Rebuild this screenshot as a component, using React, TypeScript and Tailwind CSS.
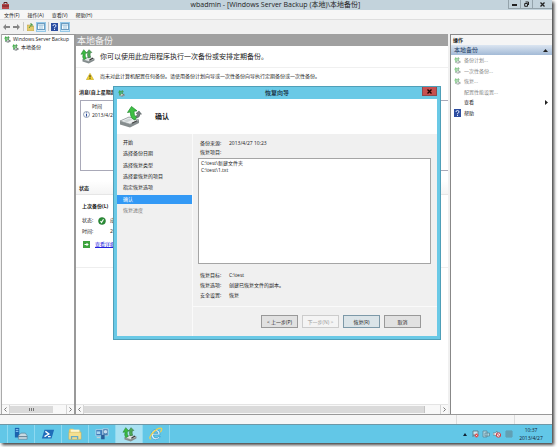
import React from "react";

function DiskIcon({ size = 8, faded = false }: { size?: number; faded?: boolean }) {
  return (
    <svg width={size} height={size} viewBox="0 0 24 24" className="shrink-0" opacity={faded ? 0.65 : 1} aria-hidden="true">
      <path d="M4 17 L13 13 L23 16 L23 18.500 L14 23 L4 20 Z" fill="#858d8e" />
      <path d="M4 17 L13 13 L23 16 L14 20 Z" fill="#dfe4e4" stroke="#7b8384" strokeWidth=".8" />
      <path d="M15 18 L21 14.500" stroke="#333" strokeWidth="1.800" />
      <path d="M6 17 Q3 13 5 8 L1.500 8.500 L6 1 L11 6.500 L8.500 7 Q7.500 12 10 15 Z" fill="#3cba42" stroke="#1c7d28" strokeWidth=".8" />
      <path d="M13 14 Q11 10 12.500 6 L10.500 6.300 L14.500 1 L19 5.500 L16.500 6 Q15.500 10 17 13 Z" fill="#4da955" stroke="#2c6a35" strokeWidth=".8" />
    </svg>
  );
}

function RestoreIcon() {
  return (
    <svg width="22" height="22" viewBox="0 0 22 22" className="shrink-0" aria-hidden="true">
      <path d="M0 15 L9 11 L19 14 L19 17 L10 21.500 L0 18.500 Z" fill="#868d8e" />
      <path d="M0 15 L9 11 L19 14 L10 18.200 Z" fill="#eceff0" stroke="#8b9293" strokeWidth=".7" />
      <path d="M3 15 L9 12.500 L13 13.600 L7 16.300 Z" fill="#cfd5d6" />
      <path d="M12 17.300 L17 14.800" stroke="#444" strokeWidth="1.200" />
      <path d="M17 12 Q20 11 20 8 L21.500 8.200 L19 5 L16 7.500 L17.600 7.700 Q17.500 9.500 15.500 10.500 Z" fill="#767f80" stroke="#4c5455" strokeWidth=".5" />
      <path d="M15 14 Q10 12.500 10.500 6 L7.500 6.500 L11.500 .5 L17 4.800 L14 5.300 Q13.500 9 16.500 11.500 Z" fill="#3fc044" stroke="#1f8a2b" strokeWidth=".7" />
    </svg>
  );
}

function HelpIcon() {
  return (
    <svg width="7" height="8" viewBox="0 0 7 8" className="shrink-0" aria-hidden="true">
      <rect width="7" height="8" fill="#2c4da0" />
      <path d="M2 3 Q2 1.500 3.500 1.500 Q5 1.500 5 3 Q5 3.800 3.500 4.500 V5.300 M3.500 6 V7" fill="none" stroke="#dfe8ff" strokeWidth="1" />
    </svg>
  );
}

function PaneIcon() {
  return (
    <svg width="8" height="7" viewBox="0 0 8 7" aria-hidden="true">
      <rect x=".5" y=".5" width="7" height="6" fill="#f4fafd" stroke="#6d9cc0" />
      <path d="M1 2 H7 M3 2 V6 M5 2 V6" stroke="#8ab5d2" strokeWidth=".8" />
    </svg>
  );
}

function Arrow({ flip = false }: { flip?: boolean }) {
  return (
    <svg width="7" height="6" viewBox="0 0 7 6" className={flip ? "rotate-180" : ""} aria-hidden="true">
      <path d="M0 3 L3 0 V2 H7 V4 H3 V6 Z" fill="#858585" />
    </svg>
  );
}

function ScrollBar({ part }: { part: boolean }) {
  return (
    <div className="flex h-[10px] shrink-0 items-center border-t border-[#e4e4e4] bg-[#f8f8f8]">
      <button aria-label="向左滚动" className="flex h-full w-2 items-center justify-center border-r border-[#d5d5d5]">
        <svg width="3" height="5" viewBox="0 0 3 5"><path d="M2.500 .5 L.5 2.500 L2.500 4.500" fill="none" stroke="#777" /></svg>
      </button>
      <div className={part ? "flex h-[7px] w-[43px] items-center justify-center gap-px bg-[#dadada]" : "h-[7px] w-11/12 border-r border-[#c4c4c4] bg-[#dadada]"}>
        {part && <><i className="h-[3px] w-px bg-[#777]" /><i className="h-[3px] w-px bg-[#777]" /><i className="h-[3px] w-px bg-[#777]" /></>}
      </div>
      <div className="flex-1" />
      <button aria-label="向右滚动" className="flex h-full w-2 items-center justify-center border-l border-[#d5d5d5]">
        <svg width="3" height="5" viewBox="0 0 3 5"><path d="M.5 .5 L2.500 2.500 L.5 4.500" fill="none" stroke="#777" /></svg>
      </button>
    </div>
  );
}

function TitleBar() {
  return (
    <header className="flex h-[10px] shrink-0 items-start bg-[#c3d3dc]">
      <div className="flex w-[43px] pl-[2px] pt-[2px]">
        <svg width="7" height="7" viewBox="0 0 7 7" aria-hidden="true">
          <path d="M2 2 V.5 H5 V2" fill="none" stroke="#5c2222" />
          <rect y="2" width="7" height="5" fill="#b8474a" />
          <path d="M0 4 H7" stroke="#6b2226" />
        </svg>
      </div>
      <h1 className="flex-1 text-center text-[7px] leading-[10px] text-[#222]">wbadmin - [Windows Server Backup (本地)\本地备份]</h1>
      <div className="flex h-[9px] w-[44px] border-b border-l border-[#94a3ab]">
        <button aria-label="最小化" className="flex w-3 items-center justify-center border-r border-[#94a3ab]">
          <svg width="5" height="5"><rect y="2" width="5" height="2" fill="#222" /></svg>
        </button>
        <button aria-label="还原" className="flex w-3 items-center justify-center border-r border-[#94a3ab]">
          <svg width="5" height="6" viewBox="0 0 5 6"><path d="M1.500 1 H4.500 V4 M.7 2.500 H3.500 V5.300 H.7 Z" fill="none" stroke="#222" /></svg>
        </button>
        <button aria-label="关闭" className="flex flex-1 items-center justify-center">
          <svg width="5" height="5" viewBox="0 0 5 5"><path d="M.5 .5 L4.500 4.500 M4.500 .5 L.5 4.500" stroke="#222" strokeWidth="1.300" /></svg>
        </button>
      </div>
    </header>
  );
}

function MenuAndTools() {
  return (
    <>
      <nav className="flex h-[10px] shrink-0 items-center gap-2 border-b border-[#dedede] bg-[#f6f6f6] pl-1 leading-[8px]">
        {["文件(F)", "操作(A)", "查看(V)", "帮助(H)"].map((m) => <button key={m}>{m}</button>)}
      </nav>
      <div className="flex h-[14px] shrink-0 items-center bg-[#f1f1f1] pb-px pl-[3px]">
        <button aria-label="后退" className="mr-[3px]"><Arrow /></button>
        <button aria-label="前进" className="mr-[3px]"><Arrow flip /></button>
        <span className="mr-[3px] h-[9px] w-px bg-[#c8c8c8]" />
        <button aria-label="上一级" className="mr-[2px]">
          <svg width="7" height="8" viewBox="0 0 7 8"><path d="M0 2 H3 L4 3 H7 V8 H0 Z" fill="#e3ca6c" stroke="#b49b45" strokeWidth=".5" /><path d="M2 5 L5 1 M5 3.500 V1 H3" stroke="#4c963c" fill="none" /></svg>
        </button>
        <button aria-label="显示控制台树" className="mr-[2px] flex h-[10px] w-[10px] items-center justify-center border border-[#94c8e8] bg-[#d5ebf8]"><PaneIcon /></button>
        <span className="mr-[2px] h-[9px] w-px bg-[#c8c8c8]" />
        <button aria-label="帮助" className="mr-[2px]"><HelpIcon /></button>
        <button aria-label="显示操作窗格" className="flex h-[10px] w-[10px] items-center justify-center border border-[#94c8e8] bg-[#d5ebf8]"><PaneIcon /></button>
      </div>
    </>
  );
}

function Tree() {
  return (
    <aside className="flex w-[73px] shrink-0 flex-col border-r border-t border-[#999] bg-white">
      <div className="flex-1 overflow-hidden whitespace-nowrap pl-[2px] leading-[8px]">
        <div className="flex h-[8px] items-center gap-[2px]"><DiskIcon size={7} />Windows Server Backup</div>
        <div className="flex h-[8px] items-center gap-[2px] pl-2"><DiskIcon size={7} />本地备份</div>
      </div>
      <ScrollBar part />
    </aside>
  );
}

function Content() {
  return (
    <main className="flex min-w-0 flex-1 flex-col border-l border-[#999] bg-white">
      <h2 className="h-[12px] shrink-0 overflow-hidden whitespace-nowrap bg-[#a0a0a0] pl-px text-[9px] leading-[13px] text-[#f4f4f4]">本地备份</h2>
      <div className="flex-1 overflow-hidden whitespace-nowrap">
        <div className="flex h-[22px] items-center gap-[5px] border-b border-[#f0f0f0] pl-1 text-[7px]">
          <DiskIcon size={15} />
          <p>你可以使用此应用程序执行一次备份或安排定期备份。</p>
        </div>
        <div className="flex h-[16px] items-center gap-[6px] pl-[10px]">
          <svg width="8" height="7" viewBox="0 0 8 7" aria-hidden="true"><path d="M4 .3 L7.700 6.700 H.3 Z" fill="#f4d32b" stroke="#b79a1c" strokeWidth=".5" /><path d="M4 2.200 V4.500 M4 5.200 V6" stroke="#222" /></svg>
          <p>尚未对此计算机配置任何备份。请使用备份计划向导或一次性备份向导执行定期备份或一次性备份。</p>
        </div>
        <h3 className="mt-[2px] h-[14px] pl-[3px] font-bold leading-[12px]">消息(自上星期起，双击消息可查看详细信息)</h3>
        <div className="ml-1 h-[71px] border border-r-0 border-[#a9a9b8]">
          <table className="w-full">
            <thead><tr><th className="h-[9px] pl-[11px] pt-px text-left font-normal leading-[8px]">时间</th></tr></thead>
            <tbody><tr><td className="flex h-[9px] items-center gap-[2px] pl-[2px]">
              <svg width="7" height="7" viewBox="0 0 7 7" aria-hidden="true"><circle cx="3.500" cy="3.500" r="3" fill="#f5f8fc" stroke="#6d7c96" strokeWidth=".7" /><path d="M3.500 3 V5.500 M3.500 1.500 V2.300" stroke="#27479a" /></svg>
              2013/4/27 10:23
            </td></tr></tbody>
          </table>
        </div>
        <h3 className="mt-[10px] h-[14px] border-b border-[#e6e6e6] bg-gradient-to-b from-white to-[#f4f4f4] pl-[3px] font-bold leading-[14px]">状态</h3>
        <div className="h-[73px] border-b border-[#eee] pl-[6px] pt-[6px]">
          <h4 className="mb-[4px] h-[10px] font-bold leading-[10px]">上次备份(L)</h4>
          <dl className="grid grid-cols-[16px_12px_1fr] leading-[11px]">
            <dt>状态:</dt>
            <dd className="flex items-center">
              <svg width="8" height="8" viewBox="0 0 8 8" aria-hidden="true"><circle cx="4" cy="4" r="3.500" fill="#2c8f38" stroke="#1f6d29" strokeWidth=".5" /><path d="M2.500 4.200 L3.500 5.500 L5.500 2.200" fill="none" stroke="#fff" strokeWidth="1.100" /></svg>
            </dd>
            <dd>成功</dd>
            <dt>时间:</dt><dd /><dd>2013/4/27 10:23</dd>
          </dl>
          <div className="mt-[2px] flex h-[10px] items-center gap-[5px] pl-px">
            <svg width="7" height="7" viewBox="0 0 7 7" aria-hidden="true"><rect width="7" height="7" fill="#3da33d" /><path d="M1.500 3.500 H5 M3.500 2 L5 3.500 L3.500 5" fill="none" stroke="#fff" /></svg>
            <a href="#details" className="text-[#2222dd] underline">查看详细信息</a>
          </div>
        </div>
      </div>
      <ScrollBar part={false} />
    </main>
  );
}

function Actions() {
  const rows = [
    { label: "备份计划...", icon: "disk", off: true },
    { label: "一次性备份...", icon: "disk", off: true },
    { label: "恢复...", icon: "disk", off: true },
    { label: "配置性能设置...", icon: "", off: true },
    { label: "查看", icon: "", off: false },
    { label: "帮助", icon: "help", off: false },
  ];
  return (
    <aside className="w-[102px] shrink-0 border-l border-t border-[#888] bg-white">
      <h2 className="h-[10px] bg-[#f5f5f5] pl-[2px] font-bold leading-[10px]">操作</h2>
      <h3 className="flex h-[10px] items-center justify-between bg-gradient-to-b from-[#dbe5f1] to-[#a3bad6] pl-[3px] pr-1 text-[6px] text-[#17375e]">
        本地备份
        <svg width="5" height="3" viewBox="0 0 5 3" aria-hidden="true"><path d="M2.500 0 L5 3 H0 Z" fill="#222" /></svg>
      </h3>
      <ul className="grid h-[63px] grid-rows-6">
        {rows.map((r) => (
          <li key={r.label} className="flex">
            <button disabled={r.off} className={`flex flex-1 items-center pl-[3px] pr-[4px] ${r.off ? "text-[#858585]" : "text-[#222]"}`}>
              <span className="w-[10px]">
                {r.icon === "disk" && <DiskIcon size={7} faded />}
                {r.icon === "help" && <HelpIcon />}
              </span>
              <span className="flex-1 text-left">{r.label}</span>
              {r.label === "查看" && <svg width="3" height="5" viewBox="0 0 3 5"><path d="M0 0 L3 2.500 L0 5 Z" fill="#222" /></svg>}
            </button>
          </li>
        ))}
      </ul>
    </aside>
  );
}

function Dialog() {
  const steps = ["开始", "选择备份日期", "选择恢复类型", "选择要恢复的项目", "指定恢复选项", "确认", "恢复进度"];
  const button = "h-[13px] w-[37px] border leading-[10px]";
  return (
    <section role="dialog" aria-label="恢复向导" className="absolute left-[113px] top-[86px] flex h-[254px] w-[328px] flex-col border border-[#4f9fb8] bg-[#6ac9e6] px-[3px] pb-[3px]">
      <header className="flex h-[12px] shrink-0 items-start">
        <div className="w-[15px] pl-px pt-[3px]"><DiskIcon size={7} /></div>
        <h2 className="flex-1 text-center text-[6px] font-medium leading-[12px] text-[#123]">恢复向导</h2>
        <button aria-label="关闭" className="flex h-[9px] w-[15px] items-center justify-center border border-t-0 border-[#8f4a4e] bg-[#c75050]">
          <svg width="5" height="5" viewBox="0 0 5 5"><path d="M.5 .5 L4.500 4.500 M4.500 .5 L.5 4.500" stroke="#200" strokeWidth="1.400" /></svg>
        </button>
      </header>
      <div className="flex h-[35px] shrink-0 items-center gap-[13px] bg-white pl-[3px]">
        <RestoreIcon />
        <h3 className="text-[7px] font-bold">确认</h3>
      </div>
      <div className="flex min-h-0 flex-1 bg-[#f0f0f0]">
        <ol className="flex h-[81px] w-[75px] shrink-0 flex-col justify-between pt-[4px]">
          {steps.map((s) => (
            <li key={s} className={`h-[9px] pl-[6px] leading-[9px] ${s === "确认" ? "bg-[#3399f5] text-white" : s === "恢复进度" ? "text-[#777]" : ""}`}>{s}</li>
          ))}
        </ol>
        <div className="flex flex-1 flex-col border-l border-[#fafafa] pt-[4px]">
          <div className="flex-1 pl-[5px] pr-[6px]">
            <dl className="grid grid-cols-[29px_1fr] pl-[2px] leading-[10px]"><dt>备份来源:</dt><dd>2013/4/27 10:23</dd></dl>
            <p id="items" className="pl-[2px] leading-[9px]">恢复项目:</p>
            <ul aria-labelledby="items" className="mt-px h-[106px] border border-[#a5a5a5] bg-white px-[2px] pt-px leading-[7px]">
              <li>C:\test\新建文件夹</li>
              <li>C:\test\1.txt</li>
            </ul>
            <dl className="mt-[6px] grid grid-cols-[29px_1fr] pl-[2px] leading-[10px]">
              <dt>恢复目标:</dt><dd>C:\test</dd>
              <dt>恢复选项:</dt><dd>创建已恢复文件的副本。</dd>
              <dt>安全设置:</dt><dd>恢复</dd>
            </dl>
          </div>
          <footer className="flex h-[30px] items-start justify-end gap-[4px] border-t border-[#fafafa] pr-4 pt-2">
            <button className={`${button} border-[#999] bg-[#e1e1e1]`}>&lt; 上一步(P)</button>
            <button disabled className={`${button} border-[#ccc] bg-[#f4f4f4] text-[#999]`}>下一步(N) &gt;</button>
            <button className={`${button} border-[#7d99a8] bg-[#dbe4e8]`}>恢复(R)</button>
            <button className={`${button} border-[#999] bg-[#e1e1e1]`}>取消</button>
          </footer>
        </div>
      </div>
    </section>
  );
}

function Taskbar() {
  const apps = [
    { name: "服务器管理器", art: <><path d="M1 1 H6 V12 H1 Z" fill="#1a62ae" /><path d="M2 3 H5 M2 5 H5" stroke="#9ad4ff" /><path d="M5 10 L8 7 H13 L15 10 V14 H5 Z" fill="#c9dae2" stroke="#597c93" strokeWidth=".7" /><path d="M5 11 H15" stroke="#527185" /></> },
    { name: "PowerShell", art: <><path d="M4 3 H15 L12 13 H1 Z" fill="#1f6cb9" /><path d="M5 5 L9 8 L4 11 M8 11 H11" fill="none" stroke="#fff" strokeWidth="1.500" /></> },
    { name: "文件资源管理器", art: <><path d="M1 4 L2 2 H6 L7 4 H14 V14 H1 Z" fill="#e8c765" /><path d="M3 3 H13 V8 H3 Z" fill="#fff6cf" /><path d="M1 6 H15 V14 H1 Z" fill="#f5df90" stroke="#c9a747" strokeWidth=".5" /><path d="M4 14 V11 H11 V14" fill="none" stroke="#66a9c7" strokeWidth="1.500" /></> },
    { name: "服务器工具", art: <><path d="M1 3 H9 V10 H1 Z" fill="#3d79b8" stroke="#d4e7f4" strokeWidth=".7" /><path d="M2 5 H6 V8 H2 Z" fill="#a7d5ef" /><path d="M9 2 H15 V10 H9 Z" fill="#4c82b4" stroke="#cfe2ef" strokeWidth=".7" /><circle cx="12" cy="5.500" r="2" fill="#c7dcef" /><path d="M7 9 H11 V14 H7 Z" fill="#295c97" /><path d="M2 12 H6" stroke="#c1ced7" strokeWidth="1.500" /></> },
    { name: "备份", art: null },
    { name: "Internet Explorer", art: <><path d="M12.500 9 H5 Q5 12.500 8 12.500 Q10 12.500 11 11 H13 Q11 14.500 7.500 14.500 Q2.500 14 2.500 8.500 Q3 3 8 3 Q13 3.500 12.500 9 Z M5 7.300 H10.300 Q10 5 8 5 Q5.500 5 5 7.300 Z" fill="#d9f2fc" stroke="#2586bd" strokeWidth=".6" fillRule="evenodd" /><path d="M2 14 Q-1 12 5 6 Q11 0 14 1.500 Q15.500 2.500 13 6" fill="none" stroke="#efd04b" strokeWidth="1.400" /></> },
  ];
  return (
    <footer className="flex h-[19px] shrink-0 border-t border-[#6f97a6] bg-[#62c7e7] pl-[7px]">
      {apps.map((a) => (
        <button key={a.name} aria-label={a.name} className={`flex w-[27px] items-center justify-center border-l border-[#8ed9f0] ${a.name === "备份" ? "bg-[#a9e1f2]" : ""}`}>
          {a.art ? <svg width="14" height="14" viewBox="0 0 16 16">{a.art}</svg> : <DiskIcon size={15} />}
        </button>
      ))}
      <div className="flex flex-1 items-center justify-end gap-[3px] border-l border-[#8ed9f0] pr-[7px]">
        <svg width="4" height="3" viewBox="0 0 4 3" className="mr-px" aria-hidden="true"><path d="M2 0 L4 3 H0 Z" fill="#123" /></svg>
        <svg width="8" height="8" viewBox="0 0 8 8" aria-hidden="true"><path d="M2 7 V1 H7 V5 H2" fill="#c9e6ef" stroke="#56747f" strokeWidth=".8" /><circle cx="5.500" cy="5.500" r="2" fill="#d64b4b" /><path d="M4.700 4.700 L6.300 6.300 M6.300 4.700 L4.700 6.300" stroke="#fff" strokeWidth=".6" /></svg>
        <svg width="8" height="8" viewBox="0 0 8 8" aria-hidden="true"><path d="M1 1 H5 V7 H1 Z M3 3 H7.500 V6 H3 Z" fill="#a9d6e3" stroke="#5c7f8c" strokeWidth=".7" /></svg>
        <svg width="8" height="8" viewBox="0 0 8 8" aria-hidden="true"><path d="M0 3 H2 L4 1 V7 L2 5 H0 Z" fill="#eee" stroke="#59737d" strokeWidth=".6" /><circle cx="5.500" cy="5" r="2.200" fill="#e9eef0" stroke="#d23c45" /><path d="M4 3.500 L7 6.500" stroke="#d23c45" /></svg>
        <svg width="8" height="8" viewBox="0 0 8 8" className="mx-px" aria-hidden="true"><path d="M1 1 H7 V7 H1 Z M1 3 H7 M1 5 H7 M3 1 V7 M5 1 V7" fill="none" stroke="#61858f" strokeWidth=".7" /></svg>
        <time className="w-[28px] text-center leading-[8px] text-[#123]">10:37<br />2013/4/27</time>
      </div>
    </footer>
  );
}

export default function App() {
  return (
    <div className="h-screen overflow-hidden bg-white pb-[4px] pr-[6px] font-['Open_Sans','Noto_Sans_CJK_SC',sans-serif] text-[5px] leading-[8px] text-[#222]">
      <div className="relative flex h-full flex-col bg-[#f0f0f0] shadow-[2px_2px_3px_rgba(0,0,0,0.75)]">
        <TitleBar />
        <MenuAndTools />
        <div className="flex min-h-0 flex-1 gap-[2px] border-b border-[#999] pl-px">
          <div className="flex min-w-0 flex-1 border-l border-[#aaa]">
            <Tree />
            <Content />
          </div>
          <Actions />
        </div>
        <div className="flex h-[9px] shrink-0 justify-end bg-[#f6f6f6]">
          <span className="w-[58px] border-l border-[#ddd]" />
          <span className="w-[38px] border-l border-[#ddd]" />
        </div>
        <Taskbar />
        <Dialog />
      </div>
    </div>
  );
}
